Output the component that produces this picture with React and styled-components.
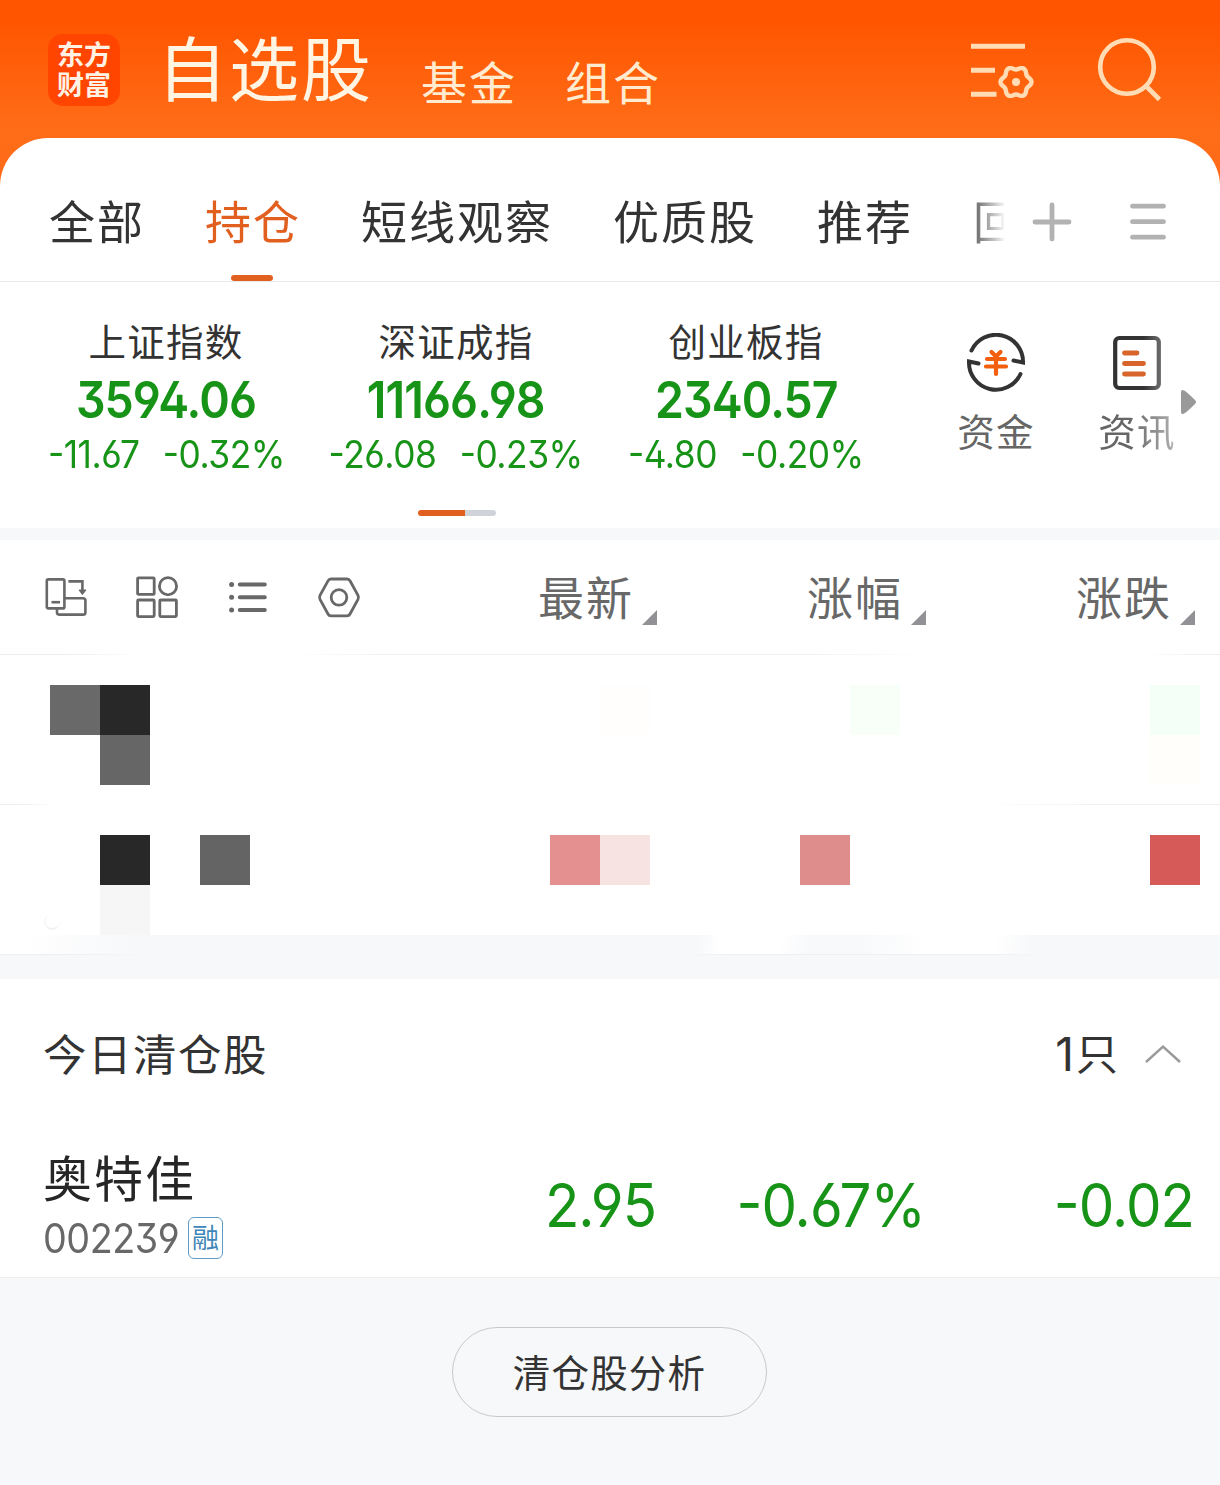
import React from "react";

import styled, { createGlobalStyle } from "styled-components";

const groups = ["全部", "持仓", "短线观察", "优质股", "推荐", "回"];

const indexes = [
  { name: "上证指数", value: "3594.06", change: "-11.67", rate: "-0.32%" },
  { name: "深证成指", value: "11166.98", change: "-26.08", rate: "-0.23%" },
  { name: "创业板指", value: "2340.57", change: "-4.80", rate: "-0.20%" },
];

const columns = ["最新", "涨幅", "涨跌"];

// masked holdings, one entry per 50px mosaic tile
const firstHolding = [
  { col: 2, row: 1, color: "#696969" },
  { col: 3, row: 1, color: "#282828" },
  { col: 3, row: 2, color: "#666666" },
  { col: 13, row: 1, color: "#fffefc" },
  { col: 18, row: 1, color: "#f7fff8" },
  { col: 24, row: 1, color: "#f4fff7" },
  { col: 24, row: 2, color: "#fffefa" },
];

const secondHolding = [
  { col: 3, row: 1, color: "#282828" },
  { col: 5, row: 1, color: "#646464" },
  { col: 12, row: 1, color: "#e59090" },
  { col: 13, row: 1, color: "#f8e3e3" },
  { col: 17, row: 1, color: "#de8c8c" },
  { col: 24, row: 1, color: "#d65a58" },
  { col: 3, row: 2, color: "#f6f6f6" },
];

const gearPath = (cx, cy) => {
  const points = [];

  for (let i = 0; i < 72; i++) {
    const angle = (i * Math.PI) / 36;
    const r = 14 + 1.5 * Math.cos(6 * angle);

    points.push(
      `${(cx + r * Math.cos(angle)).toFixed(2)} ${(cy + r * Math.sin(angle)).toFixed(2)}`
    );
  }

  return `M${points.join("L")}Z`;
};

const ManageIcon = () => (
  <svg width="68" height="64" fill="none" stroke="#ffdcb4" strokeWidth="5">
    <path d="M3 6.3H57M3 30.3H27M3 54.3H28.5" />
    <path d={gearPath(48, 42)} strokeWidth="4.4" strokeLinejoin="round" />
    <circle cx="48" cy="42" r="4" fill="#ffdcb4" stroke="none" />
  </svg>
);

const SearchIcon = () => (
  <svg width="68" height="68" fill="none" stroke="#ffdcb4" strokeWidth="4.6">
    <circle cx="32" cy="31" r="26.8" />
    <path d="M51 50L64.5 63.5" />
  </svg>
);

const PlusIcon = () => (
  <svg width="40" height="40" stroke="#b2b2b2" strokeWidth="4.8" strokeLinecap="round">
    <path d="M3 20H37M20 3V37" />
  </svg>
);

const MenuIcon = () => (
  <svg width="40" height="40" stroke="#b2b2b2" strokeWidth="4.8" strokeLinecap="round">
    <path d="M4.5 4.2H35.5M4.5 19.7H35.5M4.5 35.2H35.5" />
  </svg>
);

const FundIcon = () => (
  <svg width="60" height="60" fill="none" stroke="#333" strokeWidth="4" strokeLinecap="round">
    <path d="M5.5 17.5A27 27 0 0 1 57 29.5L47.5 27.5" />
    <path d="M12.5 30.5L3 28.5A27 27 0 0 0 54.5 41" />
    <path
      d="M25.5 19L30 23.5L34.5 19M21 26H39M20 33.5H40M30 24V41"
      stroke="#f2600f"
      strokeWidth="4.2"
    />
  </svg>
);

const NewsIcon = () => (
  <svg width="60" height="60" fill="none" strokeLinecap="round">
    <defs>
      <linearGradient id="newsFrame" x1="0" x2="1" y1="0" y2="0">
        <stop offset="0.65" stopColor="#333" />
        <stop offset="1" stopColor="#666" />
      </linearGradient>
    </defs>
    <rect x="8.2" y="5" width="43.6" height="50" rx="4" stroke="url(#newsFrame)" strokeWidth="4.2" />
    <path d="M17.5 20H30M17.5 30.5H36.5M17.5 41H36.5" stroke="#d8652b" strokeWidth="4.8" />
  </svg>
);

const RotateIcon = () => (
  <svg width="44" height="44" fill="none" stroke="#686868" strokeWidth="2.6">
    <rect x="2.8" y="4.4" width="17.6" height="29" rx="1.5" />
    <path d="M7.5 27.2H16" />
    <path d="M20.6 23.2H39Q41.4 23.2 41.4 25.4V37.4Q41.4 39.6 39 39.6H15Q13 39.6 13 37.6V33.6" />
    <path d="M24.4 6.4H38.4V15" />
    <path d="M35 15H42L38.4 19.5Z" fill="#686868" strokeWidth="1" />
  </svg>
);

const GridIcon = () => (
  <svg width="44" height="44" fill="none" stroke="#686868" strokeWidth="2.8">
    <rect x="2.6" y="2.8" width="16.6" height="16.6" rx="1" />
    <circle cx="33" cy="11.2" r="8.6" />
    <rect x="2.6" y="25" width="16.6" height="16.6" rx="1" />
    <rect x="24.8" y="25" width="16.6" height="16.6" rx="1" />
  </svg>
);

const ListIcon = () => (
  <svg width="44" height="44" fill="#686868" stroke="#686868" strokeLinecap="round">
    <path d="M13.8 9.4H38.8M13.8 22.2H38.8M13.8 35H38.8" strokeWidth="4" />
    <g stroke="none">
      <circle cx="5.6" cy="9.4" r="2.5" />
      <circle cx="5.6" cy="22.2" r="2.5" />
      <circle cx="5.6" cy="35" r="2.5" />
    </g>
  </svg>
);

const HexIcon = () => (
  <svg width="44" height="44" fill="none" stroke="#686868" strokeWidth="2.8" strokeLinejoin="round">
    <path d="M14 4H30Q32 4 33 5.8L41 20.4Q42 22.4 41 24.4L33 39Q32 40.8 30 40.8H14Q12 40.8 11 39L3 24.4Q2 22.4 3 20.4L11 5.8Q12 4 14 4Z" />
    <circle cx="22" cy="22.4" r="7.8" />
  </svg>
);

const Mosaic = ({ tiles, children }) => (
  <MosaicGrid>
    {tiles.map(({ col, row, color }) => (
      <Tile key={`${col}-${row}`} $col={col} $row={row} $color={color} />
    ))}
    {children}
  </MosaicGrid>
);

const App = () => {
  return (
    <Page>
      <GlobalStyle />
      <Header>
        <Logo>
          <span>东方</span>
          <span>财富</span>
        </Logo>
        <Title>自选股</Title>
        <SubTitle>基金</SubTitle>
        <SubTitle>组合</SubTitle>
        <HeaderIcons>
          <ManageIcon />
          <SearchIcon />
        </HeaderIcons>
      </Header>
      <Sheet>
        <TabBar>
          <Tabs>
            {groups.map((group) => (
              <Tab key={group} $active={group === "持仓"}>
                {group}
              </Tab>
            ))}
          </Tabs>
          <PlusIcon />
          <MenuIcon />
        </TabBar>
        <Market>
          <IndexArea>
            <IndexList>
              {indexes.map(({ name, value, change, rate }) => (
                <IndexCard key={name}>
                  <IndexName>{name}</IndexName>
                  <IndexValue>{value}</IndexValue>
                  <IndexChange>
                    <span>{change}</span>
                    <span>{rate}</span>
                  </IndexChange>
                </IndexCard>
              ))}
            </IndexList>
            <Pager />
          </IndexArea>
          <Shortcuts>
            <Shortcut>
              <FundIcon />
              <span>资金</span>
            </Shortcut>
            <Shortcut>
              <NewsIcon />
              <FadedLabel>资讯</FadedLabel>
            </Shortcut>
          </Shortcuts>
          <MoreArrow width="16" height="26" fill="#999">
            <path d="M0 3Q0 0 3 1.5Q5 2 14 11Q16 13 14 15Q5 24 3 24.5Q0 26 0 23Z" />
          </MoreArrow>
        </Market>
      </Sheet>
      <Divider />
      <Toolbar>
        <Tools>
          <RotateIcon />
          <GridIcon />
          <ListIcon />
          <HexIcon />
        </Tools>
        {columns.map((column) => (
          <Column key={column}>
            {column}
            <SortMark />
          </Column>
        ))}
      </Toolbar>
      <ToolbarLine />
      <Mosaic tiles={firstHolding} />
      <HoldingLine />
      <Mosaic tiles={secondHolding}>
        <Smudge />
      </Mosaic>
      <MaskedBand />
      <Cleared>
        <ClearedHead>
          <ClearedTitle>今日清仓股</ClearedTitle>
          <ClearedCount>
            <Digit>1</Digit>
            <span>只</span>
          </ClearedCount>
          <svg width="36" height="20" fill="none" stroke="#999" strokeWidth="2.4">
            <path d="M1 18L18 2.5L35 18" />
          </svg>
        </ClearedHead>
        <Stock>
          <StockInfo>
            <StockName>奥特佳</StockName>
            <StockMeta>
              <StockCode>002239</StockCode>
              <MarginBadge>融</MarginBadge>
            </StockMeta>
          </StockInfo>
          <Quote>2.95</Quote>
          <Quote>-0.67%</Quote>
          <Quote>-0.02</Quote>
        </Stock>
      </Cleared>
      <Footer>
        <AnalysisButton>清仓股分析</AnalysisButton>
      </Footer>
    </Page>
  );
};

export default App;

const GlobalStyle = createGlobalStyle`
  body {
    margin: 0;
    background-color: #f7f8fa;
  }

  svg {
    display: block;
    flex-shrink: 0;
  }
`;

const Page = styled.div`
  width: 1220px;
  height: 1485px;
  overflow: hidden;
  display: flex;
  flex-direction: column;
  font-family: "Noto Sans CJK SC", sans-serif;
  color: #333;
  white-space: nowrap;
  background: linear-gradient(#ff5500 0, #ff5500 20px, #ff6d18 130px, #ff6a18 190px, #f7f8fa 190px);
`;

const Header = styled.header`
  height: 138px;
  flex-shrink: 0;
  box-sizing: border-box;
  padding: 0 57px 0 48px;
  display: flex;
  align-items: flex-start;
`;

const Logo = styled.div`
  width: 72px;
  height: 72px;
  margin-top: 34px;
  border-radius: 15px;
  background-color: #ff4500;
  display: flex;
  flex-direction: column;
  align-items: center;
  justify-content: center;
  color: #fff2e4;
  font-size: 27px;
  font-weight: 700;
  line-height: 30px;
  padding-bottom: 2px;
  box-sizing: border-box;
`;

const Title = styled.h1`
  margin: 31px 0 0 37px;
  width: 216px;
  font-size: 70px;
  line-height: 70px;
  font-weight: 400;
  letter-spacing: 2px;
  color: #fff5e2;
`;

const SubTitle = styled.div`
  margin-top: 57px;
  margin-left: 48px;
  font-size: 46px;
  line-height: 46px;
  letter-spacing: 2px;
  color: #ffecd0;
`;

const HeaderIcons = styled.div`
  margin: 40px 0 0 auto;
  display: flex;
  gap: 59px;

  svg + svg {
    margin-top: -4px;
  }
`;

const Sheet = styled.section`
  background-color: #fff;
  border-radius: 48px 48px 0 0;
`;

const TabBar = styled.nav`
  height: 143px;
  border-bottom: 1px solid #e8e8e8;
  padding: 0 52px 0 49px;
  display: flex;
  align-items: center;

  svg {
    margin-top: 24px;
  }

  svg + svg {
    margin-left: 56px;
  }
`;

const Tabs = styled.div`
  width: 955px;
  height: 143px;
  margin-right: 28px;
  overflow: hidden;
  display: flex;
  gap: 60px;
  mask-image: linear-gradient(to right, #000 915px, transparent 957px);
`;

const Tab = styled.div`
  flex-shrink: 0;
  height: 143px;
  display: flex;
  flex-direction: column;
  align-items: center;
  font-size: 46px;
  line-height: 163px;
  letter-spacing: 2px;
  color: ${({ $active }) => ($active ? "#e2601f" : "#333")};

  &::after {
    content: "";
    width: 42px;
    height: 6px;
    margin: -26px 2px 0 0;
    border-radius: 3px;
    background-color: ${({ $active }) => ($active ? "#e2601f" : "transparent")};
  }
`;

const Market = styled.div`
  height: 246px;
  padding-left: 21px;
  display: flex;
`;

const IndexArea = styled.div`
  width: 870px;
  display: flex;
  flex-direction: column;
  align-items: center;
`;

const IndexList = styled.div`
  display: flex;
  padding-top: 33px;
`;

const IndexCard = styled.div`
  width: 290px;
  display: flex;
  flex-direction: column;
  align-items: center;
`;

const IndexName = styled.div`
  height: 50px;
  font-size: 37.5px;
  line-height: 50px;
  letter-spacing: 1.2px;
`;

const Figure = styled.div`
  font-family: Inter, sans-serif;
  font-feature-settings: "ss01", "case";
  color: #179317;
`;

const IndexValue = styled(Figure)`
  height: 68px;
  line-height: 69px;
  font-size: 51px;
  font-weight: 560;
  transform: scaleX(0.91);
  letter-spacing: -1px;
`;

const IndexChange = styled(Figure)`
  height: 44px;
  line-height: 43px;
  font-size: 38px;
  letter-spacing: -0.5px;
  transform: scaleX(0.93);
  display: flex;
  gap: 25px;
`;

const Pager = styled.div`
  width: 78px;
  height: 6px;
  margin: 33px 0 0 2px;
  border-radius: 3px;
  background: linear-gradient(to right, #e2601f 47px, #d0d4da 47px);
`;

const Shortcuts = styled.div`
  padding: 51px 0 0 34px;
  display: flex;
`;

const Shortcut = styled.div`
  width: 141px;
  display: flex;
  flex-direction: column;
  align-items: center;
  font-size: 37.5px;
  line-height: 50px;
  letter-spacing: 1.2px;
  color: #666;

  span {
    margin: 12px 0 0 1px;
  }
`;

const FadedLabel = styled.span`
  mask-image: linear-gradient(to right, #000 40%, rgba(0, 0, 0, 0.5) 100%);
`;

const MoreArrow = styled.svg`
  margin: 107px 0 0 -26px;
`;

const Divider = styled.div`
  height: 12px;
  flex-shrink: 0;
  background-color: #f7f8fa;
`;

const Toolbar = styled.div`
  height: 114px;
  flex-shrink: 0;
  background-color: #fff;
  display: flex;
  align-items: center;
`;

const Tools = styled.div`
  width: 344px;
  padding-left: 44px;
  display: flex;
  gap: 47px;
`;

const Column = styled.div`
  width: 269px;
  display: flex;
  justify-content: flex-end;
  align-items: flex-end;
  font-size: 46px;
  line-height: 60px;
  padding-bottom: 4px;
  letter-spacing: 2px;
  color: #686868;
`;

const SortMark = styled.i`
  width: 15px;
  height: 15px;
  margin: 0 0 0 8px;
  background-color: #919196;
  clip-path: polygon(100% 0, 100% 100%, 0 100%);
`;

const ToolbarLine = styled.div`
  height: 1px;
  flex-shrink: 0;
  background: linear-gradient(
    to right,
    #ececec 60px,
    #fff 140px,
    #fff 290px,
    #efefef 400px,
    #efefef 780px,
    #fff 930px,
    #fff 1145px,
    #efefef 1200px
  );
`;

const HoldingLine = styled.div`
  height: 1px;
  flex-shrink: 0;
  background: linear-gradient(to right, #ececec 15px, #fff 55px, #fff 980px, #efefef 1120px);
`;

const MosaicGrid = styled.div`
  flex-shrink: 0;
  padding-top: 30px;
  display: grid;
  grid-template-columns: repeat(24, 50px);
  grid-template-rows: 50px 50px;
  background-color: #fff;

  & + ${HoldingLine} {
    border-top: 19px solid #fff;
  }
`;

const Tile = styled.div`
  grid-column: ${({ $col }) => $col};
  grid-row: ${({ $row }) => $row};
  background-color: ${({ $color }) => $color};
`;

const Smudge = styled.div`
  grid-column: 1;
  grid-row: 2;
  align-self: end;
  justify-self: end;
  width: 14px;
  height: 14px;
  margin: 0 -10px 5px 0;
  border-radius: 50%;
  border-bottom: 2px solid #f3f3f3;
  border-left: 2px solid #f7f7f7;
`;

const MaskedBand = styled.div`
  height: 44px;
  flex-shrink: 0;
  background-color: #f7f8fa;
  background-image: linear-gradient(
      to right,
      #eeeff1 60px,
      transparent 160px,
      transparent 680px,
      #eeeff1 740px,
      #eeeff1 980px,
      transparent 1050px
    ),
    linear-gradient(
      100deg,
      #fff 25px,
      #f7f8fa 130px,
      #f7f8fa 690px,
      #fff 710px,
      #fff 768px,
      #f8f9fb 800px,
      #f8f9fb 850px,
      #fff 915px,
      #fff 980px,
      #f7f8fa 1020px
    );
  background-repeat: no-repeat;
  background-size: 100% 1px, 100% 19px;
  background-position: 0 19px, 0 0;
`;

const Cleared = styled.section`
  height: 298px;
  flex-shrink: 0;
  border-bottom: 1px solid #eeeff1;
  background-color: #fff;
`;

const ClearedHead = styled.div`
  height: 150px;
  padding: 0 39px 0 43px;
  display: flex;
  align-items: center;
`;

const ClearedTitle = styled.h2`
  margin: 0 auto 0 0;
  padding-bottom: 2px;
  font-size: 43.5px;
  line-height: 60px;
  font-weight: 400;
  letter-spacing: 1.5px;
`;

const ClearedCount = styled.div`
  margin-right: 27px;
  display: flex;
  align-items: center;
  font-size: 42px;
  line-height: 60px;

  span + span {
    padding-bottom: 4px;
  }
`;

const Digit = styled.span`
  font-family: Inter, sans-serif;
  font-size: 46px;
  margin-right: 2px;
`;

const Stock = styled.div`
  height: 148px;
  display: flex;
`;

const StockInfo = styled.div`
  width: 344px;
  padding: 17px 0 0 43px;
`;

const StockName = styled.div`
  font-size: 49px;
  line-height: 60px;
  letter-spacing: 2px;
  color: #262626;
`;

const StockMeta = styled.div`
  height: 42px;
  margin-top: 11px;
  display: flex;
  align-items: center;
`;

const StockCode = styled(Figure)`
  width: 145px;
  font-size: 41px;
  line-height: 43px;
  letter-spacing: -0.5px;
  color: #686868;
  transform: scaleX(0.92);
  transform-origin: left;
`;

const MarginBadge = styled.div`
  width: 35px;
  height: 42px;
  box-sizing: border-box;
  border: 1.5px solid #5f9cc5;
  border-radius: 6px;
  text-align: center;
  font-size: 27px;
  line-height: 37px;
  color: #3f86b8;
`;

const Quote = styled(Figure)`
  width: 269px;
  margin-top: 25px;
  text-align: right;
  font-size: 60px;
  line-height: 102px;
  height: 102px;
  letter-spacing: -1px;
  transform: scaleX(0.94);
  transform-origin: right;
`;

const Footer = styled.footer`
  flex: 1;
  padding: 49px 1px 0 0;
  display: flex;
  justify-content: center;
  align-items: flex-start;
  background-color: #f7f8fa;
`;

const AnalysisButton = styled.button`
  width: 315px;
  height: 90px;
  padding: 0 0 4px;
  border: 1px solid #c8c9cb;
  border-radius: 45px;
  background: none;
  font-family: inherit;
  font-size: 37.5px;
  letter-spacing: 1.2px;
  color: #333;
`;
